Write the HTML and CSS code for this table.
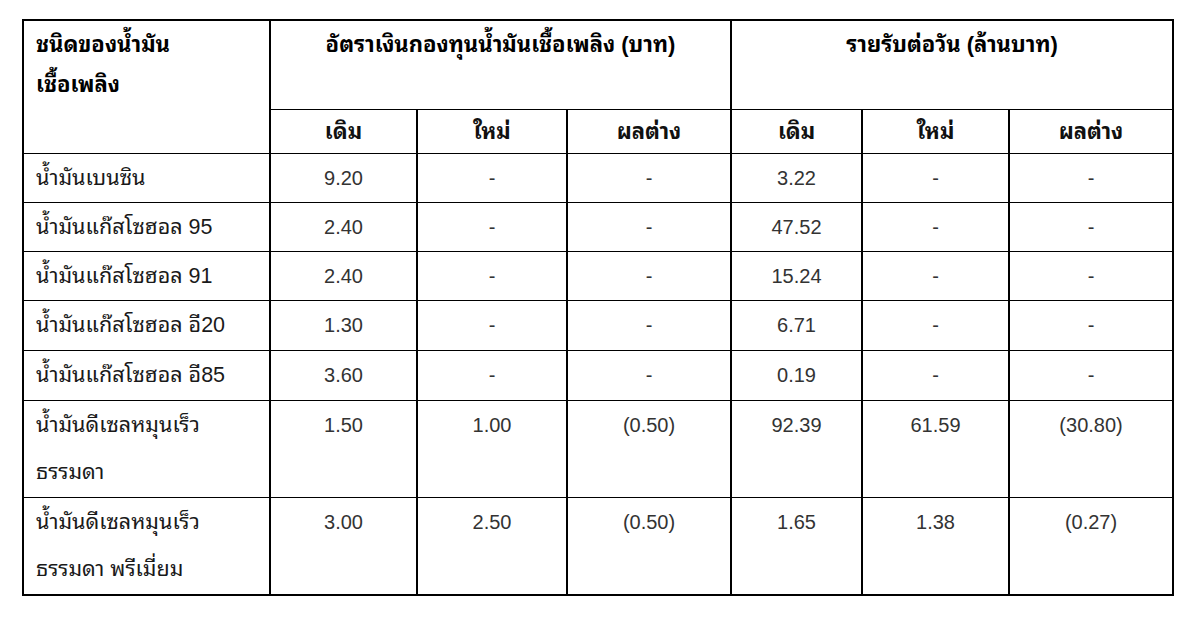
FILE: index.html
```html
<!DOCTYPE html>
<html lang="th">
<head>
<meta charset="utf-8">
<title>อัตราเงินกองทุนน้ำมันเชื้อเพลิง</title>
<link rel="stylesheet" href="styles.css">
</head>
<body>
<div class="page">
<table class="fund">
  <colgroup>
    <col class="c-name">
    <col class="c-a1">
    <col class="c-a2">
    <col class="c-a3">
    <col class="c-b1">
    <col class="c-b2">
    <col class="c-b3">
  </colgroup>
  <thead>
    <tr class="head-top">
      <th rowspan="2" class="name-head">ชนิดของน้ำมัน<br>เชื้อเพลิง</th>
      <th colspan="3">อัตราเงินกองทุนน้ำมันเชื้อเพลิง (บาท)</th>
      <th colspan="3">รายรับต่อวัน (ล้านบาท)</th>
    </tr>
    <tr class="head-sub">
      <th>เดิม</th><th>ใหม่</th><th>ผลต่าง</th>
      <th>เดิม</th><th>ใหม่</th><th>ผลต่าง</th>
    </tr>
  </thead>
  <tbody>
    <tr>
      <td class="name">น้ำมันเบนซิน</td>
      <td>9.20</td><td>-</td><td>-</td><td>3.22</td><td>-</td><td>-</td>
    </tr>
    <tr>
      <td class="name">น้ำมันแก๊สโซฮอล 95</td>
      <td>2.40</td><td>-</td><td>-</td><td>47.52</td><td>-</td><td>-</td>
    </tr>
    <tr>
      <td class="name">น้ำมันแก๊สโซฮอล 91</td>
      <td>2.40</td><td>-</td><td>-</td><td>15.24</td><td>-</td><td>-</td>
    </tr>
    <tr class="grow1">
      <td class="name">น้ำมันแก๊สโซฮอล อี20</td>
      <td>1.30</td><td>-</td><td>-</td><td>6.71</td><td>-</td><td>-</td>
    </tr>
    <tr class="grow1">
      <td class="name">น้ำมันแก๊สโซฮอล อี85</td>
      <td>3.60</td><td>-</td><td>-</td><td>0.19</td><td>-</td><td>-</td>
    </tr>
    <tr class="grow1">
      <td class="name">น้ำมันดีเซลหมุนเร็ว<br>ธรรมดา</td>
      <td>1.50</td><td>1.00</td><td>(0.50)</td><td>92.39</td><td>61.59</td><td>(30.80)</td>
    </tr>
    <tr class="grow1">
      <td class="name">น้ำมันดีเซลหมุนเร็ว<br>ธรรมดา พรีเมี่ยม</td>
      <td>3.00</td><td>2.50</td><td>(0.50)</td><td>1.65</td><td>1.38</td><td>(0.27)</td>
    </tr>
  </tbody>
</table>
</div>
</body>
</html>
```

FILE: styles.css
```css
html, body {
  margin: 0;
  padding: 0;
  background: #ffffff;
}

.page {
  padding: 19px 0 0 22px;
}

.fund {
  border-collapse: collapse;
  table-layout: fixed;
  width: 1151px;
  font-family: "Liberation Sans", "Noto Sans Thai Looped", "Loma", "Garuda", "Norasi", "Waree", "Tlwg Typo", "Noto Sans", sans-serif;
  font-size: 20px;
  color: #333333;
  border: 2px solid #000;
}

.c-name { width: 247px; }
.c-a1 { width: 147px; }
.c-a2 { width: 150px; }
.c-a3 { width: 164px; }
.c-b1 { width: 131px; }
.c-b2 { width: 147px; }
.c-b3 { width: 164px; }

.fund th,
.fund td {
  border: 1px solid #000;
  border-left-width: 2px;
  border-right-width: 2px;
  vertical-align: top;
  text-align: center;
  padding: 1px 0 0 0;
  line-height: 47px;
}

.fund th {
  font-weight: bold;
  font-size: 22px;
  color: #000;
  line-height: 40px;
}

.head-top th {
  height: 84px;
  padding-top: 4px;
}

.head-sub th {
  height: 41px;
  padding-top: 2px;
  color: #111;
}

.fund th.name-head {
  text-align: left;
  padding-left: 12px;
}

.fund td.name {
  text-align: left;
  padding-left: 12px;
  font-size: 21.5px;
  color: #1a1a1a;
}

.grow1 td {
  padding-bottom: 1px;
}
```
